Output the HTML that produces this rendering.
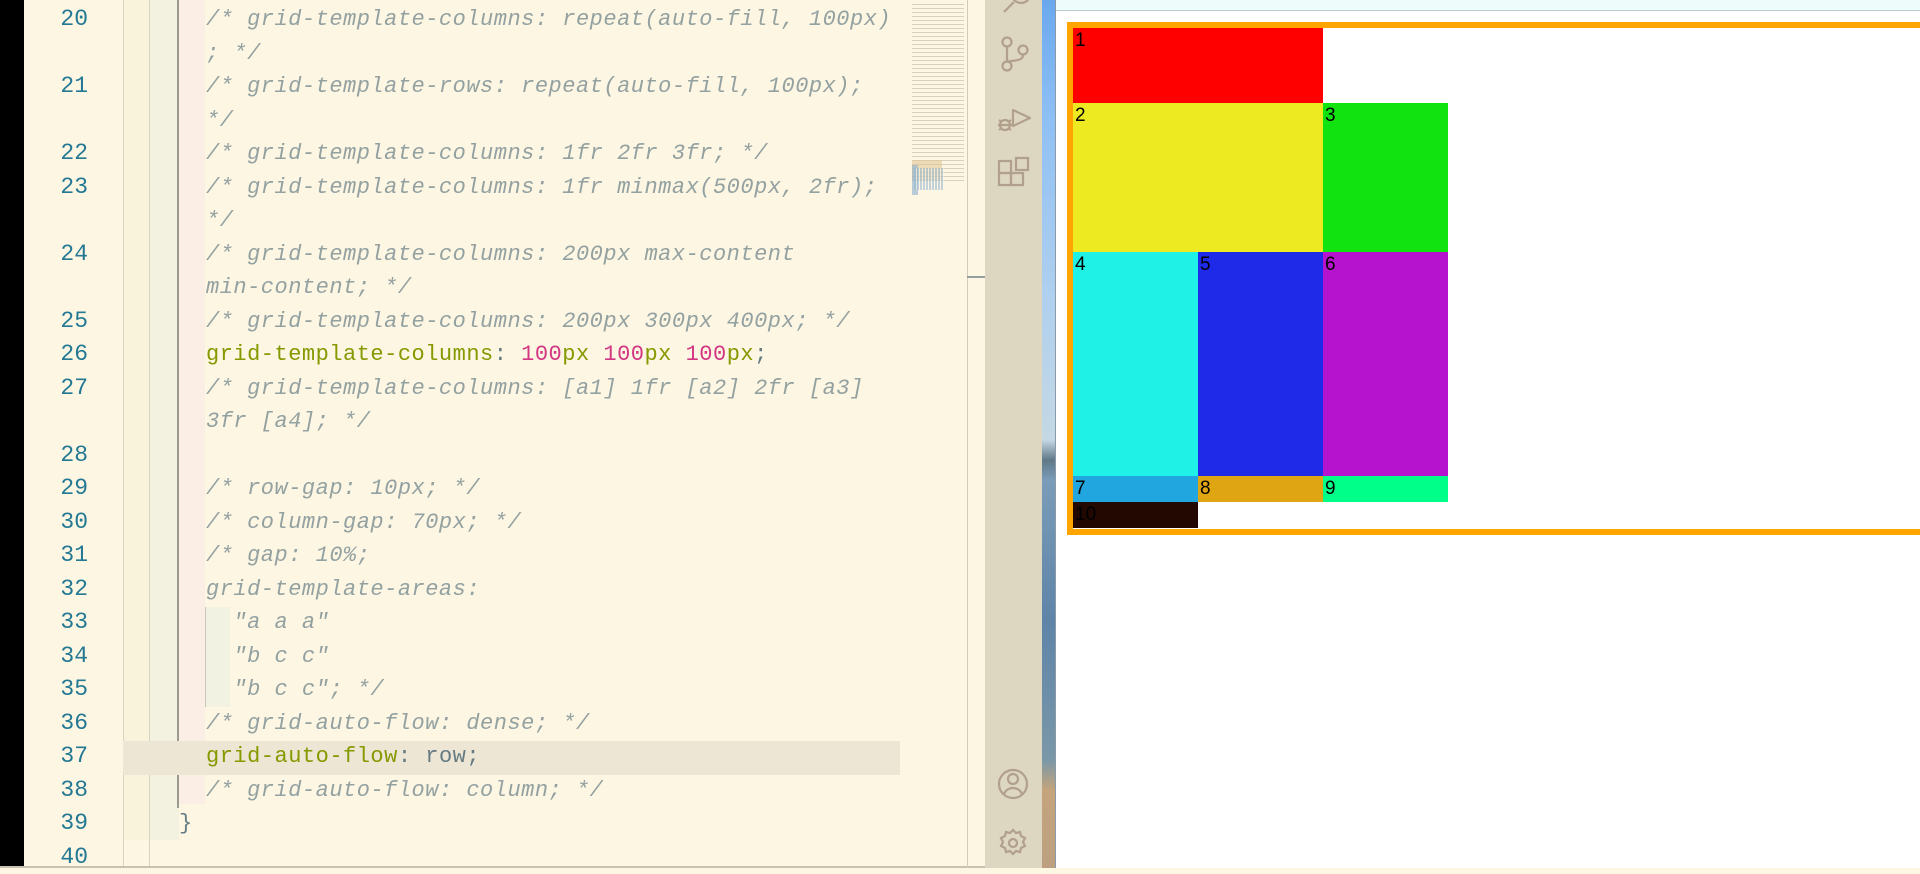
<!DOCTYPE html>
<html><head><meta charset="utf-8"><style>
*{margin:0;padding:0;box-sizing:border-box}
body{width:1920px;height:868px;overflow:hidden;position:relative;background:#fdf6e3;font-family:"Liberation Mono",monospace}
.abs{position:absolute}
.ln{position:absolute;left:24px;width:64px;text-align:right;color:#237893;font-size:23px;line-height:33.5px;font-family:"Liberation Mono",monospace}
.code{position:absolute;left:206px;font-size:22px;line-height:33.5px;white-space:pre;color:#93a1a1;letter-spacing:0.5px}
.c{font-style:italic;color:#93a1a1}
.p{color:#859900}
.n{color:#d33682}
.t{color:#657b83}
.cell{position:absolute;font-family:"Liberation Sans",sans-serif;font-size:19px;color:#000;padding:3px 0 0 2px;line-height:20px}
</style></head><body>
<div class="abs" style="left:0;top:0;width:24px;height:868px;background:#000"></div>
<div class="abs" style="left:123px;top:0;width:26px;height:840px;background:#f9f3dc"></div>
<div class="abs" style="left:149px;top:0;width:30px;height:840px;background:#f3f2e0"></div>
<div class="abs" style="left:179px;top:0;width:26px;height:804px;background:#fbeee4"></div>
<div class="abs" style="left:123px;top:0;width:1px;height:868px;background:#d8d2c0"></div>
<div class="abs" style="left:149px;top:0;width:1px;height:868px;background:#d8d2c0"></div>
<div class="abs" style="left:177px;top:0;width:2px;height:808px;background:#9a9a90"></div>
<div class="abs" style="left:205px;top:607px;width:1px;height:100px;background:#c8c8b8"></div>
<div class="abs" style="left:206px;top:607px;width:24px;height:100px;background:#f2f2e2"></div>
<div class="abs" style="left:123px;top:741px;width:777px;height:34px;background:#eee6d4"></div>
<div class="abs" style="left:0;top:866px;width:1056px;height:2px;background:#c8c2b0"></div>

<div style="position:absolute;top:3px;left:0">
<div class="ln" style="top:0">20</div>
<div class="ln" style="top:67px">21</div>
<div class="ln" style="top:134px">22</div>
<div class="ln" style="top:167.5px">23</div>
<div class="ln" style="top:234.5px">24</div>
<div class="ln" style="top:301.5px">25</div>
<div class="ln" style="top:335px">26</div>
<div class="ln" style="top:368.5px">27</div>
<div class="ln" style="top:435.5px">28</div>
<div class="ln" style="top:469px">29</div>
<div class="ln" style="top:502.5px">30</div>
<div class="ln" style="top:536px">31</div>
<div class="ln" style="top:569.5px">32</div>
<div class="ln" style="top:603px">33</div>
<div class="ln" style="top:636.5px">34</div>
<div class="ln" style="top:670px">35</div>
<div class="ln" style="top:703.5px">36</div>
<div class="ln" style="top:737px">37</div>
<div class="ln" style="top:770.5px">38</div>
<div class="ln" style="top:804px">39</div>
<div class="ln" style="top:837.5px">40</div>
<div class="code" style="top:0"><span class="c">/* grid-template-columns: repeat(auto-fill, 100px)
; */
/* grid-template-rows: repeat(auto-fill, 100px);
*/
/* grid-template-columns: 1fr 2fr 3fr; */
/* grid-template-columns: 1fr minmax(500px, 2fr);
*/
/* grid-template-columns: 200px max-content
min-content; */
/* grid-template-columns: 200px 300px 400px; */</span>
<span class="p">grid-template-columns</span><span class="t">: </span><span class="n">100</span><span class="p">px</span> <span class="n">100</span><span class="p">px</span> <span class="n">100</span><span class="p">px</span><span class="t">;</span>
<span class="c">/* grid-template-columns: [a1] 1fr [a2] 2fr [a3]
3fr [a4]; */

/* row-gap: 10px; */
/* column-gap: 70px; */
/* gap: 10%;
grid-template-areas:
  "a a a"
  "b c c"
  "b c c"; */
/* grid-auto-flow: dense; */</span>
<span class="p">grid-auto-flow</span><span class="t">: row;</span>
<span class="c">/* grid-auto-flow: column; */</span></div>
<div class="code" style="top:804px;left:179px;color:#657b83">}</div>
</div>

<div class="abs" style="left:912px;top:2px;width:52px;height:180px;opacity:.55;background:repeating-linear-gradient(#fdf6e3 0 2px,#b8b098 2px 3px,#fdf6e3 3px 4px)"></div>
<div class="abs" style="left:912px;top:160px;width:30px;height:20px;background:#e3c89a;opacity:.6"></div>
<div class="abs" style="left:912px;top:165px;width:6px;height:30px;background:#8ab0d0;opacity:.6"></div>
<div class="abs" style="left:914px;top:168px;width:30px;height:22px;background:repeating-linear-gradient(90deg,#9bbad0 0 2px,#fdf6e3 2px 3px);opacity:.6"></div>
<div class="abs" style="left:967px;top:0;width:1px;height:868px;background:#d4ccb8"></div>
<div class="abs" style="left:967px;top:276px;width:18px;height:2px;background:#93a1a1"></div>

<div class="abs" style="left:985px;top:0;width:57px;height:868px;background:#ddd6c1"></div>
<svg class="abs" style="left:985px;top:0" width="57" height="868" fill="none" stroke="#b1a08c" stroke-width="2.2">
<circle cx="36" cy="-6" r="9"/><path d="M29 2 L19 12"/>
<circle cx="22" cy="42" r="4.5"/><circle cx="22" cy="66" r="4.5"/><circle cx="38" cy="50" r="4.5"/><path d="M22 47 V61 M38 55 C38 62 26 60 22 62"/>
<path d="M28 110 V126 L45 118 Z" stroke-linejoin="round"/><circle cx="20" cy="125" r="5"/><path d="M13 125 H27 M14 120 L17 122 M26 120 L23 122 M14 130 L17 128 M26 130 L23 128"/>
<rect x="14" y="173" width="12" height="12"/><rect x="26" y="173" width="12" height="12"/><rect x="14" y="161" width="12" height="12"/><rect x="31" y="158" width="12" height="12"/>
<circle cx="28" cy="784" r="14"/><circle cx="28" cy="779" r="5"/><path d="M19 794 C22 786 34 786 37 794"/>
<circle cx="28" cy="843" r="4"/><path d="M28 830 l3 3 4-1 1 4 4 2-2 4 2 4-4 2-1 4-4-1-3 3-3-3-4 1-1-4-4-2 2-4-2-4 4-2 1-4 4 1z"/>
</svg>

<div class="abs" style="left:1042px;top:0;width:14px;height:868px;background:linear-gradient(#6aa8ee 0,#8fc0f4 120px,#b0d0ee 300px,#c4d8e4 440px,#607888 460px,#7a9cb8 480px,#5f84a8 620px,#7a98a8 760px,#c4a47c 790px,#bca080 868px)"></div>
<div class="abs" style="left:1055px;top:0;width:1px;height:868px;background:#8a9aa8"></div>

<div class="abs" style="left:1056px;top:0;width:864px;height:868px;background:#fff"></div>
<div class="abs" style="left:1056px;top:0;width:864px;height:11px;background:#eefcfc;border-bottom:1px solid #b8cccc"></div>
<div class="abs" style="left:1067px;top:22px;width:860px;height:513px;border:6px solid #ffa500;border-right:none"></div>
<div class="cell" style="left:1073px;top:28px;width:250px;height:75px;background:#ff0000">1</div>
<div class="cell" style="left:1073px;top:103px;width:250px;height:149px;background:#eeea22">2</div>
<div class="cell" style="left:1323px;top:103px;width:125px;height:149px;background:#11e311">3</div>
<div class="cell" style="left:1073px;top:252px;width:125px;height:224px;background:#1ff1e6">4</div>
<div class="cell" style="left:1198px;top:252px;width:125px;height:224px;background:#1f2ae8">5</div>
<div class="cell" style="left:1323px;top:252px;width:125px;height:224px;background:#b613cf">6</div>
<div class="cell" style="left:1073px;top:476px;width:125px;height:26px;background:#22a6e0">7</div>
<div class="cell" style="left:1198px;top:476px;width:125px;height:26px;background:#e0a513">8</div>
<div class="cell" style="left:1323px;top:476px;width:125px;height:26px;background:#00ff88">9</div>
<div class="cell" style="left:1073px;top:502px;width:125px;height:26px;background:#220800;color:#000">10</div>
</body></html>
